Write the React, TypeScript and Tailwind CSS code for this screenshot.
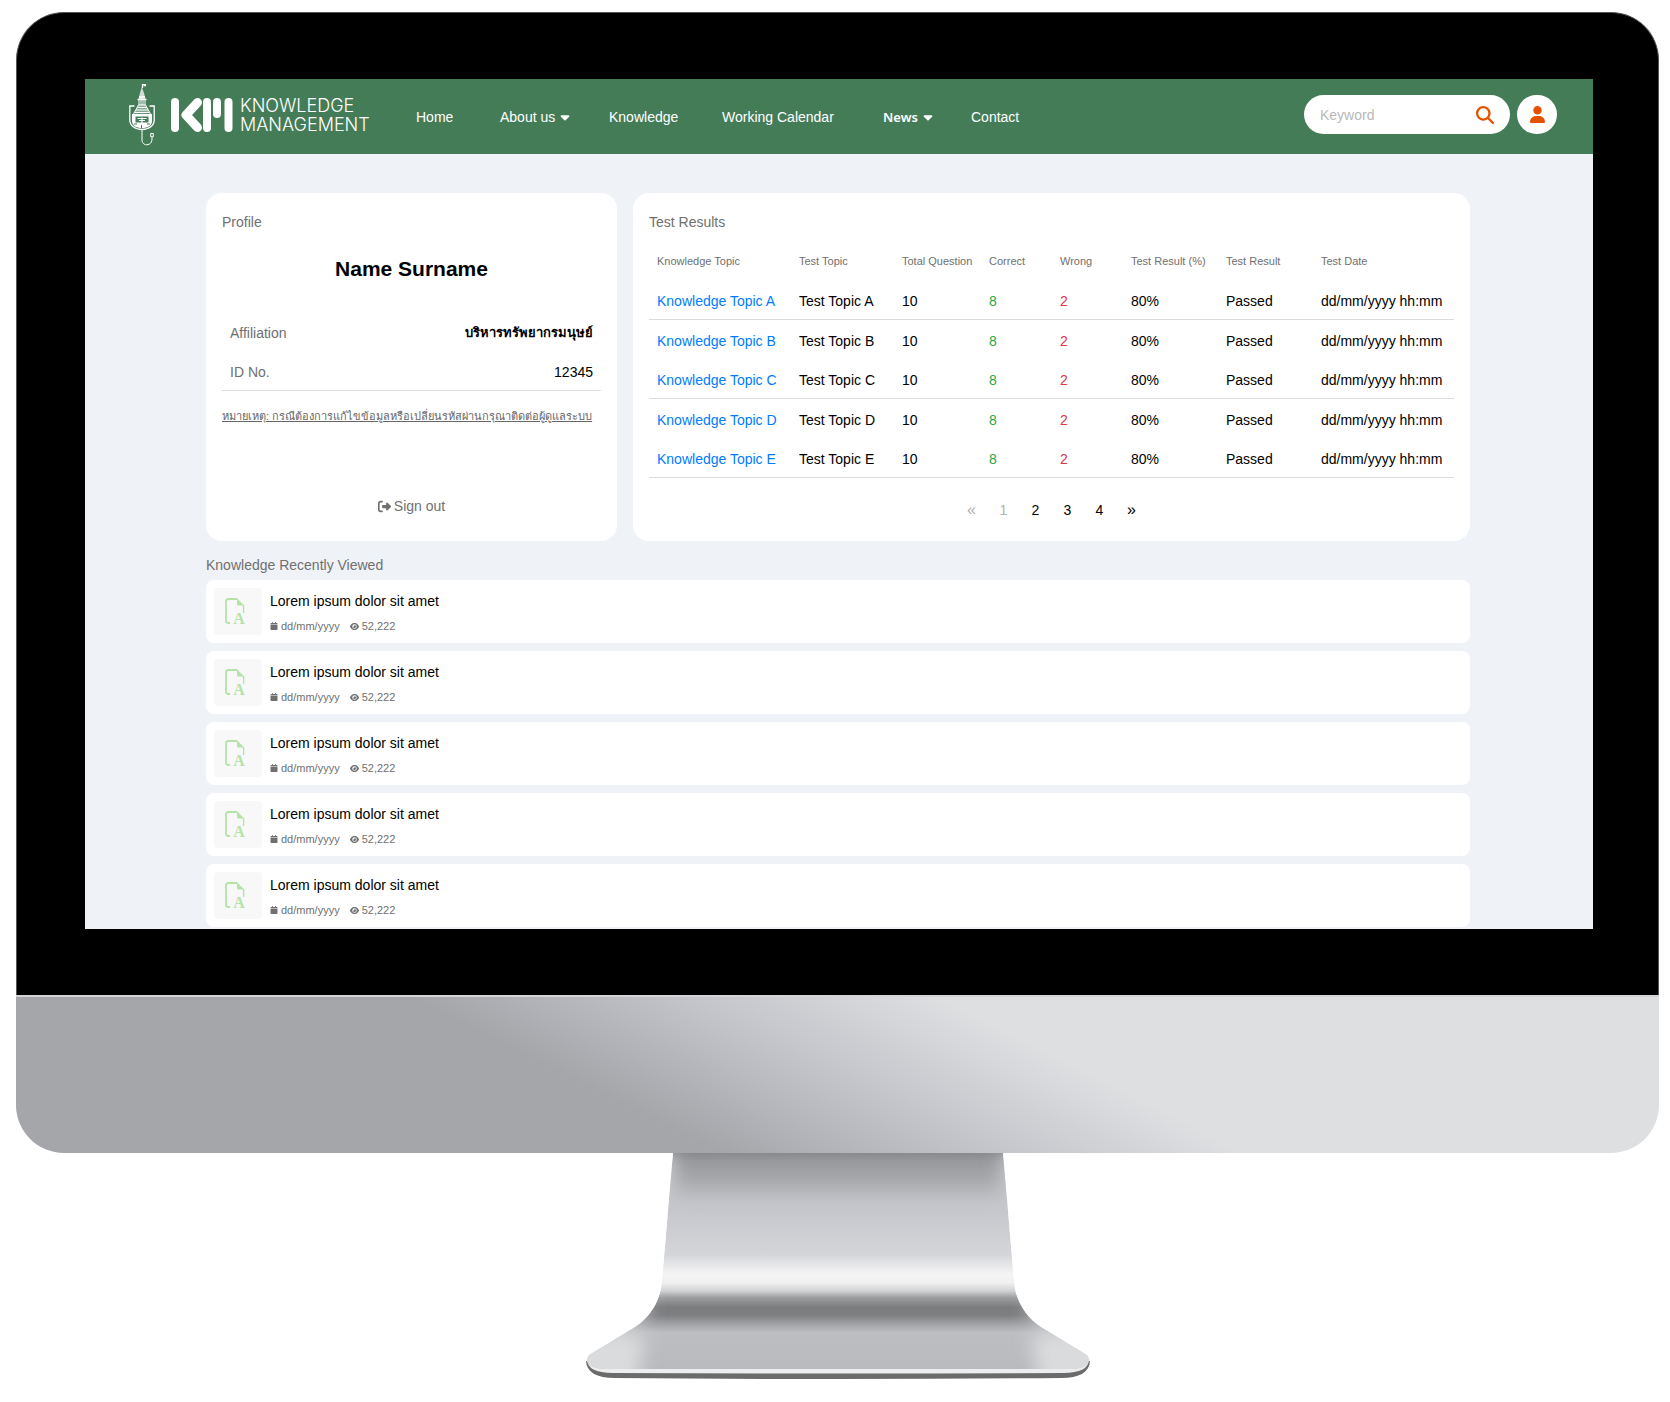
import React from "react";
import { FaMagnifyingGlass, FaUser, FaCaretDown, FaRightFromBracket, FaCalendar, FaEye } from "react-icons/fa6";

const topics = ["A", "B", "C", "D", "E"];
const recent = [1, 2, 3, 4, 5];

function Emblem() {
  return (
    <svg viewBox="0 0 26 63" className="h-[63px] w-[26px] shrink-0" fill="none" stroke="#fff" aria-hidden="true">
      <path d="M13.5 5V1.5h3v1.2h-2" strokeWidth="1.2" />
      <path d="M12.8 4 15 10l1.5 6h-7L11 10z" fill="#fff" fillOpacity=".75" stroke="none" />
      <path d="M8.5 16.5h9M10 14h6" strokeWidth="1.4" />
      <path d="M10 17v5M12 17v5M14 17v5M16 17v5" strokeWidth="1" />
      <path d="M9.5 21.5h7l4.500 9H5z" fill="#fff" fillOpacity=".35" stroke="none" />
      <path d="M9.5 22h7M8.4 24.5h9.4M7 27h12M5.5 29.5h15" strokeWidth="1" />
      <path d="M9.5 22 4.5 31M16.5 22l5 9" strokeWidth="1" />
      <path d="M5.5 23H.8v14c0 5.5 5 9.5 12.2 9.5S25.2 42.5 25.2 37V23h-4.7" strokeWidth="1.3" />
      <path d="M3 31h20v7c0 4.500-4 7-10 7S3 42.500 3 38z" fill="#fff" stroke="none" />
      <path d="M6.500 33.500h13v6h-13z" fill="#457c58" stroke="none" />
      <path d="M8.500 35.500h9M13 34.500v6M10 37.500h6" strokeWidth="1.2" />
      <path d="M12.500 42v3M5 41h3M18 41h3" stroke="#457c58" strokeWidth="1" />
      <path d="M13 47v10c0 6.500 10 6.500 10-1v-2" strokeWidth="1" />
      <path d="M21.700 50.500h2.600v3.200h-2.600z" strokeWidth="1" />
    </svg>
  );
}

function Mark() {
  return (
    <svg viewBox="0 0 62 34" className="h-[34px] w-[62px] shrink-0" fill="none" stroke="#fff" strokeWidth="8" strokeLinecap="round" aria-hidden="true">
      <path d="M4 4v26" />
      <path d="M26.500 4.500 15 17l11.500 12.500" strokeWidth="9" strokeLinejoin="round" />
      <path d="M36 4v26M46 4v12M57.500 4v26" />
    </svg>
  );
}

function DocIcon() {
  return (
    <svg viewBox="0 -4 20 35" className="h-[35px] w-[20px]" fill="none" stroke="#b4e3a8" aria-hidden="true">
      <path d="M12 1H3.500Q1 1 1 3.500v19Q1 25 3.500 25H5" strokeWidth="1.8" />
      <path d="M18.600 7v8" strokeWidth="1.4" />
      <path d="M12 .3 19.200 7.500H13.500Q12 7.500 12 6z" fill="#b4e3a8" stroke="none" />
      <text x="14" y="26" textAnchor="middle" fontFamily="Liberation Serif, serif" fontWeight="700" fontSize="16" fill="#b4e3a8" stroke="none">A</text>
    </svg>
  );
}

function Stand() {
  const shape = "M88 0H418L429 127C430 146 440 164 456 174L502 202Q505 206 503 210Q499 216 486 216H20Q7 216 3 210Q1 206 4 202L50 174C66 164 76 146 77 127Z";
  return (
    <svg viewBox="0 0 506 229" className="mx-auto block h-[229px] w-[506px]" aria-hidden="true">
      <defs>
        <linearGradient id="metal" gradientUnits="userSpaceOnUse" x1="0" y1="0" x2="0" y2="216">
          <stop offset="0" stopColor="#898a8c" />
          <stop offset=".04" stopColor="#98999c" />
          <stop offset=".12" stopColor="#a7a8ab" />
          <stop offset=".23" stopColor="#c3c4c9" />
          <stop offset=".36" stopColor="#cdced2" />
          <stop offset=".47" stopColor="#d4d5d8" />
          <stop offset=".52" stopColor="#e6e7e9" />
          <stop offset=".56" stopColor="#f4f4f4" />
          <stop offset=".6" stopColor="#f1f1f1" />
          <stop offset=".64" stopColor="#cfd0d2" />
          <stop offset=".67" stopColor="#9c9d9f" />
          <stop offset=".715" stopColor="#7b7c7e" />
          <stop offset=".75" stopColor="#7d7e80" />
          <stop offset=".79" stopColor="#a0a1a4" />
          <stop offset=".83" stopColor="#bdbec2" />
          <stop offset="1" stopColor="#b9babe" />
        </linearGradient>
        <clipPath id="body"><path d={shape} /></clipPath>
        <filter id="soft" x="-50%" y="-50%" width="200%" height="200%"><feGaussianBlur stdDeviation="9" /></filter>
      </defs>
      <path d="M1 208Q2 225 30 225Q253 227 476 225Q504 225 505 208Z" fill="#6b6b6b" />
      <path d="M2 205Q1 220 28 220Q253 221 478 220Q505 220 504 205Z" fill="#ecedee" />
      <g clipPath="url(#body)">
        <path d={shape} fill="url(#metal)" />
        <g filter="url(#soft)">
          <path d="M-20 240V176L40 178L60 184L50 240ZM526 240V176L466 178L446 184L456 240Z" fill="#dadbdd" />
          <path d="M68 0H90V60H68ZM416 0H438V60H416Z" fill="#c6c7cb" />
          <path d="M36 150H66L58 174H30ZM440 150H470L476 174H448Z" fill="#bdbec1" />
        </g>
      </g>
    </svg>
  );
}

const card = "rounded-2xl bg-white px-4 pt-[19px]";
const cell = "px-2 pt-[11px] pb-2 text-left font-normal";
const head = "px-2 pt-[11px] pb-[11px] text-left text-[11px] leading-4 font-normal text-[#707070]";
const navLink = "flex items-center gap-[3px]";

export default function App() {
  return (
    <div className="bg-white pt-3 font-['Liberation_Sans',Arial,sans-serif] text-sm leading-5 text-black">
      <div className="mr-[11px] ml-4">
        <div className="rounded-t-[48px] border border-b-0 border-[#555] bg-black pt-[66px] pr-[65px] pb-[66px] pl-[68px]">
          <div className="overflow-hidden bg-[#eff3f8] pb-0.5">
            <header className="flex h-[75px] items-center bg-[#457c58] pr-9 pl-11 text-white">
              <a href="#home" className="mb-1 flex items-center" aria-label="Knowledge Management">
                <Emblem />
                <span className="ml-4 flex"><Mark /></span>
                <span className="ml-[7px] w-[152px] font-['Inter',sans-serif] text-[18px] leading-[19px] font-light">
                  KNOWLEDGE
                  <br />
                  MANAGEMENT
                </span>
              </a>
              <nav className="ml-6 grid grid-cols-[84px_109px_113px_161px_88px_auto] whitespace-nowrap">
                <a href="#home" className={navLink}>Home</a>
                <a href="#about" className={navLink}>About us <FaCaretDown className="size-[14px]" /></a>
                <a href="#knowledge" className={navLink}>Knowledge</a>
                <a href="#calendar" className={navLink}>Working Calendar</a>
                <a href="#news" className={navLink}><span className="font-['Noto_Sans',sans-serif] text-[13px] font-semibold">News</span> <FaCaretDown className="size-[14px]" /></a>
                <a href="#contact" className={navLink}>Contact</a>
              </nav>
              <form className="mb-1 ml-auto flex items-center gap-[7px]" onSubmit={(e) => e.preventDefault()}>
                <div className="flex h-[39px] w-[206px] items-center rounded-full bg-white pr-4 pl-4">
                  <input aria-label="Keyword" placeholder="Keyword" className="w-0 flex-1 text-black outline-none placeholder:text-[#b8b8b8]" />
                  <button type="submit" aria-label="Search" className="text-[#e65100]"><FaMagnifyingGlass className="size-[18px]" /></button>
                </div>
                <button type="button" aria-label="Account" className="flex h-[39px] w-10 items-center justify-center rounded-full bg-white text-[#e65100]">
                  <FaUser className="size-[17px]" />
                </button>
              </form>
            </header>

            <main className="pt-[39px] pr-[123px] pl-[121px]">
              <div className="grid grid-cols-[411fr_837fr] gap-4">
                <section className={`${card} flex flex-col pb-[25px]`}>
                  <h2 className="text-[#707070]">Profile</h2>
                  <p className="mt-[23px] text-center text-[21px] leading-7 font-bold">Name Surname</p>
                  <table className="mt-[29px] w-full border-separate border-spacing-0">
                    <tbody>
                      <tr>
                        <th scope="row" className={`${cell} text-[#707070]`}>Affiliation</th>
                        <td className="px-2 pt-[11px] pb-2 text-right text-[13px] font-bold">บริหารทรัพยากรมนุษย์</td>
                      </tr>
                      <tr>
                        <th scope="row" className={`${cell} border-b border-[#dcdcdc] text-[#707070]`}>ID No.</th>
                        <td className="border-b border-[#dcdcdc] px-2 pt-[11px] pb-2 text-right">12345</td>
                      </tr>
                    </tbody>
                  </table>
                  <p className="mt-[17px] text-[11px] leading-4 whitespace-nowrap text-[#666] underline">
                    หมายเหตุ: กรณีต้องการแก้ไขข้อมูลหรือเปลี่ยนรหัสผ่านกรุณาติดต่อผู้ดูแลระบบ
                  </p>
                  <button type="button" className="mx-auto mt-auto flex items-center gap-[3px] text-[#707070]">
                    <FaRightFromBracket className="size-[13px]" />
                    Sign out
                  </button>
                </section>

                <section className={`${card} pb-[21px]`}>
                  <h2 className="text-[#707070]">Test Results</h2>
                  <table className="mt-[10px] w-full table-fixed border-separate border-spacing-0 whitespace-nowrap">
                    <thead>
                      <tr>
                        <th scope="col" className={`${head} w-[142px]`}>Knowledge Topic</th>
                        <th scope="col" className={`${head} w-[103px]`}>Test Topic</th>
                        <th scope="col" className={`${head} w-[87px]`}>Total Question</th>
                        <th scope="col" className={`${head} w-[71px]`}>Correct</th>
                        <th scope="col" className={`${head} w-[71px]`}>Wrong</th>
                        <th scope="col" className={`${head} w-[95px]`}>Test Result (%)</th>
                        <th scope="col" className={`${head} w-[95px]`}>Test Result</th>
                        <th scope="col" className={`${head} w-[141px]`}>Test Date</th>
                      </tr>
                    </thead>
                    <tbody className="[&>tr:nth-child(odd)>td]:border-b [&>tr>td]:border-[#dcdcdc]">
                      {topics.map((t) => (
                        <tr key={t}>
                          <td className={cell}><a href="#topic" className="text-[#007bff]">Knowledge Topic {t}</a></td>
                          <td className={cell}>Test Topic {t}</td>
                          <td className={cell}>10</td>
                          <td className={`${cell} text-[#28a745]`}>8</td>
                          <td className={`${cell} text-[#dc3545]`}>2</td>
                          <td className={cell}>80%</td>
                          <td className={cell}>Passed</td>
                          <td className={cell}>dd/mm/yyyy hh:mm</td>
                        </tr>
                      ))}
                    </tbody>
                  </table>
                  <nav aria-label="Pagination" className="mt-[22px] flex justify-center">
                    <button type="button" disabled className="w-8 text-base leading-5 text-[#b0b0b0]">«</button>
                    <button type="button" disabled className="w-8 text-[#b0b0b0]">1</button>
                    <button type="button" className="w-8">2</button>
                    <button type="button" className="w-8">3</button>
                    <button type="button" className="w-8">4</button>
                    <button type="button" className="w-8 text-base leading-5">»</button>
                  </nav>
                </section>
              </div>

              <h2 className="mt-[14px] mb-[5px] text-[#707070]">Knowledge Recently Viewed</h2>
              <ul className="flex flex-col gap-2">
                {recent.map((n) => (
                  <li key={n} className="flex gap-2 rounded-lg bg-white p-2">
                    <div className="flex h-[47px] w-12 items-center justify-center rounded bg-[#f8f8f8] pr-1.5">
                      <DocIcon />
                    </div>
                    <div className="pt-[3px]">
                      <a href="#item">Lorem ipsum dolor sit amet</a>
                      <div className="mt-[7px] flex items-center text-[11px] leading-4 text-[#707070]">
                        <FaCalendar className="mr-[3px] size-2" />
                        dd/mm/yyyy
                        <FaEye className="mr-[3px] ml-2.5 size-[9px]" />
                        52,222
                      </div>
                    </div>
                  </li>
                ))}
              </ul>
            </main>
          </div>
        </div>
        <div className="h-[158px] rounded-b-[48px] border-t-2 border-[#d4d4d7] bg-[linear-gradient(27deg,#a5a6aa_36%,#c6c7cc_51%,#dedfe1_63%)] bg-origin-border" />
        <Stand />
      </div>
    </div>
  );
}
